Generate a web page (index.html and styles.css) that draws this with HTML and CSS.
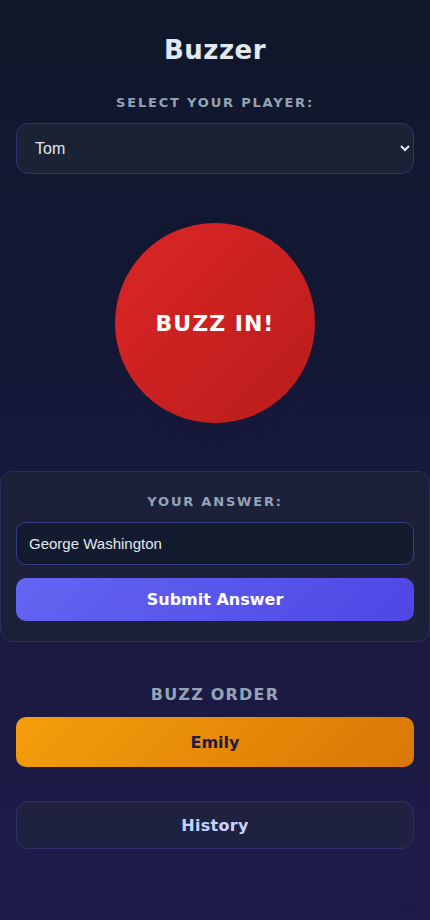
FILE: index.html
```html
<!DOCTYPE html>
<html lang="en">
<head>
<meta charset="utf-8">
<meta name="viewport" content="width=device-width, initial-scale=1">
<title>Buzzer</title>
<link rel="stylesheet" href="styles.css">
</head>
<body>
<main class="app">
  <h1 class="title">Buzzer</h1>
  <label class="label" for="player">Select your player:</label>
  <select id="player" class="select">
    <option>Tom</option>
    <option>Emily</option>
  </select>
  <div class="buzz-wrap">
    <button class="buzz">BUZZ IN!</button>
  </div>
  <section class="card">
    <label class="label" for="answer">Your answer:</label>
    <input id="answer" class="input" type="text" value="George Washington">
    <button class="submit">Submit Answer</button>
  </section>
  <h2 class="order-title">Buzz Order</h2>
  <div class="order-item">Emily</div>
  <button class="history">History</button>
</main>
<div class="watermark">vdev</div>
</body>
</html>
```
FILE: styles.css
```css
html, body {
  margin: 0;
  padding: 0;
}
body {
  min-height: 920px;
  background: linear-gradient(180deg, #0f172a 0%, #1e1b4b 100%);
  font-family: "DejaVu Sans", sans-serif;
  color: #e2e8f0;
  overflow: hidden;
}
.app {
  display: flex;
  flex-direction: column;
  padding: 35px 16px 0;
}
.title {
  margin: 0;
  font-size: 26px;
  line-height: 31px;
  font-weight: 700;
  letter-spacing: 0.5px;
  text-align: center;
  color: #e2e8f0;
}
.label {
  display: block;
  margin: 29px 0 12px;
  font-size: 13px;
  line-height: 16px;
  font-weight: 700;
  letter-spacing: 1.8px;
  text-transform: uppercase;
  text-align: center;
  color: #94a3b8;
}
.select {
  height: 51px;
  width: 100%;
  padding: 0 10px 0 14px;
  border: 1px solid #2e3270;
  border-radius: 12px;
  background: #1a2236;
  color: #e2e8f0;
  font-family: "Liberation Sans", Arial, sans-serif;
  font-size: 16px;
}
.buzz-wrap {
  display: flex;
  justify-content: center;
  margin: 49px 0 48px;
}
.buzz {
  width: 200px;
  height: 200px;
  border: none;
  border-radius: 50%;
  background: linear-gradient(135deg, #dc2626 0%, #b91c1c 100%);
  color: #ffffff;
  font-family: "DejaVu Sans", sans-serif;
  font-size: 22px;
  font-weight: 700;
  letter-spacing: 1px;
  box-shadow: 0 6px 18px rgba(0, 0, 0, 0.06);
}
.card {
  margin: 0 -16px;
  padding: 6px 15px 20px;
  border: 1px solid #2a2e58;
  border-radius: 12px;
  background: #1c2139;
}
.card .label {
  margin-top: 16px;
}
.input {
  display: block;
  box-sizing: border-box;
  width: 100%;
  height: 43px;
  padding: 0 12px;
  border: 1px solid #383c8a;
  border-radius: 10px;
  background: #131b2e;
  color: #e2e8f0;
  font-family: "Liberation Sans", Arial, sans-serif;
  font-size: 15px;
}
.submit {
  display: block;
  width: 100%;
  height: 43px;
  margin-top: 13px;
  border: none;
  border-radius: 10px;
  background: linear-gradient(135deg, #6366f1 0%, #4f46e5 100%);
  color: #ffffff;
  font-family: "DejaVu Sans", sans-serif;
  font-size: 16px;
  font-weight: 700;
}
.order-title {
  margin: 43px 0 12px;
  font-size: 16px;
  line-height: 20px;
  font-weight: 700;
  letter-spacing: 1.2px;
  text-transform: uppercase;
  text-align: center;
  color: #94a3b8;
}
.order-item {
  height: 50px;
  display: flex;
  align-items: center;
  justify-content: center;
  border-radius: 10px;
  background: linear-gradient(135deg, #f59e0b 0%, #d97706 100%);
  color: #1e1b4b;
  font-size: 16px;
  font-weight: 700;
}
.history {
  height: 48px;
  margin-top: 34px;
  border: 1px solid #2e3166;
  border-radius: 12px;
  background: #1e2140;
  color: #c7d2fe;
  font-family: "DejaVu Sans", sans-serif;
  font-size: 16px;
  font-weight: 700;
  letter-spacing: 0.3px;
}
.watermark {
  position: fixed;
  right: 9px;
  bottom: 4px;
  font-family: "DejaVu Sans", sans-serif;
  font-size: 10px;
  color: #000000;
  opacity: 0.15;
}
```
